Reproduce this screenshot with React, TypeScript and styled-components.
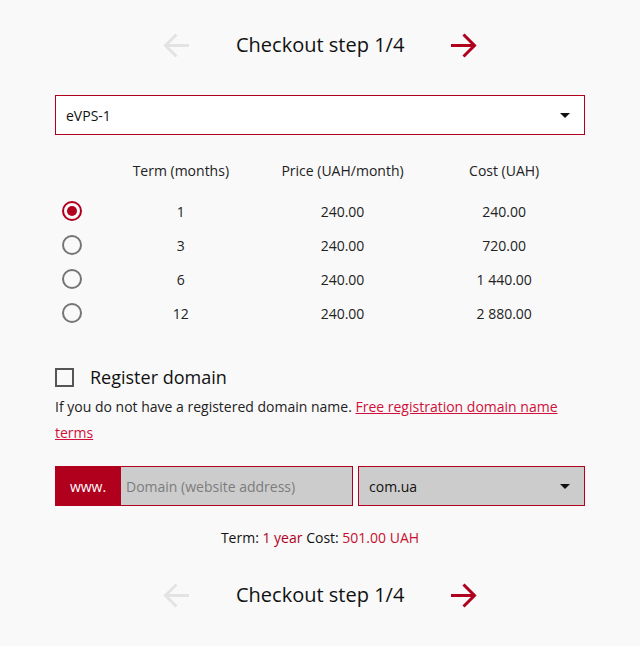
import React, { useState } from "react";
import styled, { createGlobalStyle } from "styled-components";

const RED = "#b0001e";

const Global = createGlobalStyle`
  html, body { margin: 0; padding: 0; background: #f9f9f9; }
  body { font-family: "Open Sans", "Liberation Sans", sans-serif; color: #222; }
  * { box-sizing: border-box; }
`;

const Page = styled.div`
  width: 530px;
  margin: 0 auto;
  padding-top: 20px;
  padding-bottom: 26px;
`;

const Nav = styled.div<{ $mt?: number }>`
  height: 50px;
  display: flex;
  align-items: center;
  justify-content: center;
  gap: 46px;
  margin-top: ${(p) => p.$mt ?? 0}px;
`;

const NavTitle = styled.div`
  font-size: 20px;
  line-height: 26px;
  margin-top: -1px;
  color: #111;
  width: 168px;
  text-align: center;
  white-space: nowrap;
`;

const ArrowBtn = styled.button<{ $active?: boolean }>`
  width: 27px;
  height: 27px;
  padding: 0;
  border: 0;
  background: none;
  display: flex;
  color: ${(p) => (p.$active ? RED : "#e3e3e3")};
  cursor: ${(p) => (p.$active ? "pointer" : "default")};
`;

const Arrow = ({ dir }: { dir: "left" | "right" }) => (
  <svg width="27" height="27" viewBox="0 0 27 27" fill="none" stroke="currentColor" strokeWidth="3" strokeLinecap="butt" strokeLinejoin="miter">
    {dir === "right" ? (
      <>
        <path d="M1 13.5H24.5" />
        <path d="M13.5 2.5L24.5 13.5L13.5 24.5" />
      </>
    ) : (
      <>
        <path d="M26 13.5H2.5" />
        <path d="M13.5 2.5L2.5 13.5L13.5 24.5" />
      </>
    )}
  </svg>
);

const Caret = styled.span`
  width: 0;
  height: 0;
  border-left: 5px solid transparent;
  border-right: 5px solid transparent;
  border-top: 5px solid #111;
`;

const SelectBox = styled.div<{ $grey?: boolean }>`
  height: 40px;
  border: 1px solid ${RED};
  background: ${(p) => (p.$grey ? "#cccccc" : "#ffffff")};
  display: flex;
  align-items: center;
  justify-content: space-between;
  padding: 0 14px 0 10px;
  font-size: 14px;
  color: #111;
`;

const PlanSelect = styled(SelectBox)`
  margin-top: 25px;
`;

const Table = styled.div`
  margin-top: 18px;
  display: grid;
  grid-template-columns: 45px 1fr 1fr 1fr;
  font-size: 14px;
  color: #222;
`;

const HeadCell = styled.div`
  height: 34px;
  display: flex;
  align-items: center;
  justify-content: center;
  margin-bottom: 7px;
`;

const Cell = styled.div`
  height: 34px;
  display: flex;
  align-items: center;
  justify-content: center;
`;

const RadioCell = styled.label`
  height: 34px;
  display: flex;
  align-items: center;
  padding-left: 7px;
  cursor: pointer;
`;

const Radio = styled.span<{ $on?: boolean }>`
  width: 20px;
  height: 20px;
  border-radius: 50%;
  border: 2px solid ${(p) => (p.$on ? RED : "#757575")};
  display: flex;
  align-items: center;
  justify-content: center;
  &::after {
    content: "";
    width: 10px;
    height: 10px;
    border-radius: 50%;
    background: ${(p) => (p.$on ? RED : "transparent")};
  }
`;

const CheckRow = styled.label`
  margin-top: 34px;
  height: 26px;
  display: flex;
  align-items: center;
  gap: 16px;
  font-size: 18px;
  color: #111;
  cursor: pointer;
`;

const Checkbox = styled.span`
  width: 19px;
  height: 19px;
  border: 2px solid #555;
`;

const Note = styled.p`
  margin: 4px 0 0;
  font-size: 14px;
  line-height: 26px;
  color: #222;
`;

const Link = styled.a`
  color: #d0103a;
  text-decoration: underline;
`;

const DomainRow = styled.div`
  margin-top: 20px;
  display: grid;
  grid-template-columns: 298px 1fr;
  gap: 5px;
  height: 40px;
`;

const DomainInput = styled.div`
  display: flex;
  height: 40px;
`;

const Prefix = styled.div`
  width: 66px;
  background: ${RED};
  color: #fff;
  font-size: 14px;
  display: flex;
  align-items: center;
  justify-content: center;
`;

const InputField = styled.input`
  flex: 1;
  min-width: 0;
  height: 40px;
  border: 1px solid ${RED};
  border-left: 0;
  background: #cccccc;
  font-family: inherit;
  font-size: 14px;
  padding: 0 5px;
  color: #222;
  outline: none;
  &::placeholder { color: #7c7c7c; }
`;

const Summary = styled.div`
  margin-top: 19px;
  line-height: 26px;
  text-align: center;
  font-size: 14px;
  color: #111;
`;

const Accent = styled.span<{ $tone?: "dark" | "bright" }>`
  color: ${(p) => (p.$tone === "bright" ? "#c8102e" : RED)};
`;

const rows = [
  { term: "1", price: "240.00", cost: "240.00" },
  { term: "3", price: "240.00", cost: "720.00" },
  { term: "6", price: "240.00", cost: "1 440.00" },
  { term: "12", price: "240.00", cost: "2 880.00" },
];

const StepNav = ({ mt }: { mt?: number }) => (
  <Nav $mt={mt}>
    <ArrowBtn aria-label="Previous"><Arrow dir="left" /></ArrowBtn>
    <NavTitle>Checkout step 1/4</NavTitle>
    <ArrowBtn $active aria-label="Next"><Arrow dir="right" /></ArrowBtn>
  </Nav>
);

export default function App() {
  const [sel, setSel] = useState(0);
  return (
    <Page>
      <Global />
      <StepNav />
      <PlanSelect>
        <span>eVPS-1</span>
        <Caret />
      </PlanSelect>
      <Table>
        <HeadCell />
        <HeadCell>Term (months)</HeadCell>
        <HeadCell>Price (UAH/month)</HeadCell>
        <HeadCell>Cost (UAH)</HeadCell>
        {rows.map((r, i) => (
          <React.Fragment key={r.term}>
            <RadioCell onClick={() => setSel(i)}>
              <Radio $on={sel === i} />
            </RadioCell>
            <Cell>{r.term}</Cell>
            <Cell>{r.price}</Cell>
            <Cell>{r.cost}</Cell>
          </React.Fragment>
        ))}
      </Table>
      <CheckRow>
        <Checkbox />
        Register domain
      </CheckRow>
      <Note>
        If you do not have a registered domain name.{" "}
        <Link href="#">Free registration domain name terms</Link>
      </Note>
      <DomainRow>
        <DomainInput>
          <Prefix>www.</Prefix>
          <InputField placeholder="Domain (website address)" />
        </DomainInput>
        <SelectBox $grey>
          <span>com.ua</span>
          <Caret />
        </SelectBox>
      </DomainRow>
      <Summary>
        Term: <Accent>1 year</Accent> Cost: <Accent $tone="bright">501.00 UAH</Accent>
      </Summary>
      <StepNav mt={19} />
    </Page>
  );
}
